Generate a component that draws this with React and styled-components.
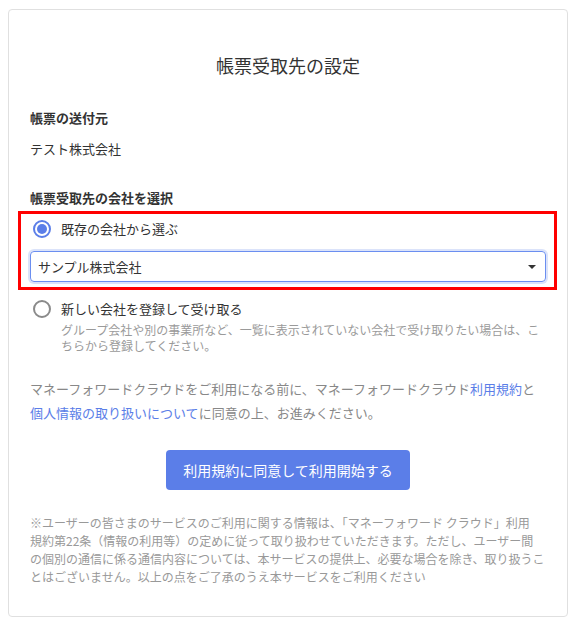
import React from 'react';
import styled, { createGlobalStyle } from 'styled-components';

const GlobalStyle = createGlobalStyle`
  body {
    margin: 0;
    background: #fff;
    font-family: "Noto Sans CJK JP", "Noto Sans", sans-serif;
    color: #333;
  }
`;

const Card = styled.div`
  box-sizing: border-box;
  width: 560px;
  height: 608px;
  margin: 9px 0 0 8px;
  padding: 43px 21px 0 21px;
  border: 1px solid #e0e0e0;
  border-radius: 4px;
`;

const Title = styled.h1`
  margin: 0;
  font-size: 18px;
  line-height: 24px;
  font-weight: 400;
  text-align: center;
  color: #333;
`;

const Label = styled.div`
  margin-top: ${(p) => p.$top}px;
  font-size: 13px;
  line-height: 20px;
  font-weight: 700;
  color: #333;
`;

const Value = styled.div`
  margin-top: 11px;
  font-size: 13px;
  line-height: 20px;
  color: #333;
`;

const Highlight = styled.div`
  margin: 3px -11px 0 -12px;
  padding: 5px 8px 5px 9px;
  border: 3px solid #ff0000;
`;

const RadioRow = styled.label`
  display: flex;
  align-items: center;
  gap: 10px;
  padding-left: 3px;
  font-size: 13px;
  line-height: 20px;
  color: #333;
`;

const RadioMark = styled.span`
  box-sizing: border-box;
  flex: none;
  width: 18px;
  height: 18px;
  border-radius: 50%;
  border: 2px solid ${(p) => (p.$checked ? '#5b7ee8' : '#8a8a8a')};
  display: flex;
  align-items: center;
  justify-content: center;

  &::after {
    content: '';
    width: 10px;
    height: 10px;
    border-radius: 50%;
    background: ${(p) => (p.$checked ? '#5b7ee8' : 'transparent')};
  }
`;

const SelectBox = styled.div`
  box-sizing: border-box;
  display: flex;
  align-items: center;
  justify-content: space-between;
  height: 31px;
  margin-top: 12px;
  padding: 0 8px 0 7px;
  border: 1px solid #6b8ef0;
  border-radius: 4px;
  box-shadow: 0 0 0 2px rgba(91, 126, 232, 0.22);
  font-size: 13px;
  color: #333;
`;

const Block = styled.div`
  margin-top: 9px;
`;

const Note = styled.p`
  margin: 3px 0 0 31px;
  font-size: 12px;
  line-height: 16px;
  color: #9a9a9a;
`;

const Terms = styled.p`
  margin: 23px 0 0;
  font-size: 13px;
  line-height: 24px;
  color: #888;
`;

const Link = styled.a`
  color: #5b7ee8;
  text-decoration: none;
`;

const ButtonWrap = styled.div`
  display: flex;
  justify-content: center;
  margin-top: 25px;
`;

const Button = styled.button`
  height: 40px;
  padding: 0 17px;
  border: none;
  border-radius: 4px;
  background: #5b7ee8;
  color: #fff;
  font-family: inherit;
  font-size: 14px;
  cursor: pointer;
`;

const Footnote = styled.p`
  margin: 24px 0 0;
  font-size: 12px;
  line-height: 18px;
  color: #999;
`;

export default function App() {
  return (
    <>
      <GlobalStyle />
      <Card>
        <Title>帳票受取先の設定</Title>

        <Label $top={31}>帳票の送付元</Label>
        <Value>テスト株式会社</Value>

        <Label $top={29}>帳票受取先の会社を選択</Label>
        <Highlight>
          <RadioRow>
            <RadioMark $checked />
            既存の会社から選ぶ
          </RadioRow>
          <SelectBox>
            <span>サンプル株式会社</span>
            <svg width="10" height="6" viewBox="0 0 10 6">
              <path d="M1 1h8L5 5z" fill="#333" />
            </svg>
          </SelectBox>
        </Highlight>

        <Block>
          <RadioRow>
            <RadioMark />
            新しい会社を登録して受け取る
          </RadioRow>
          <Note>
            グループ会社や別の事業所など、一覧に表示されていない会社で受け取りたい場合は、こちらから登録してください。
          </Note>
        </Block>

        <Terms>
          マネーフォワードクラウドをご利用になる前に、マネーフォワードクラウド
          <Link href="#">利用規約</Link>と<Link href="#">個人情報の取り扱いについて</Link>
          に同意の上、お進みください。
        </Terms>

        <ButtonWrap>
          <Button>利用規約に同意して利用開始する</Button>
        </ButtonWrap>

        <Footnote>
          ※ユーザーの皆さまのサービスのご利用に関する情報は、「マネーフォワード クラウド」利用
          <br />
          規約第22条（情報の利用等）の定めに従って取り扱わせていただきます。ただし、ユーザー間
          <br />
          の個別の通信に係る通信内容については、本サービスの提供上、必要な場合を除き、取り扱うこ
          <br />
          とはございません。以上の点をご了承のうえ本サービスをご利用ください
        </Footnote>
      </Card>
    </>
  );
}
